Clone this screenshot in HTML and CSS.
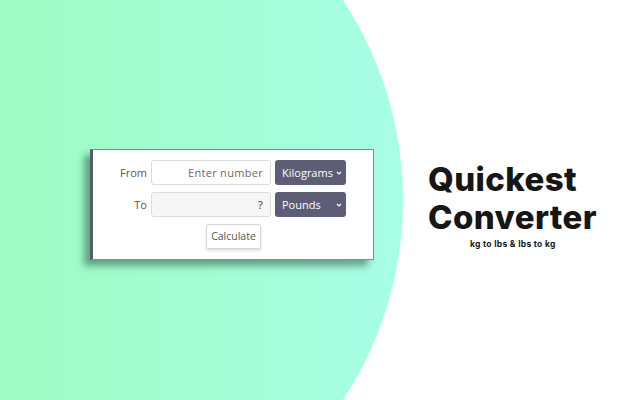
FILE: index.html
```html
<!DOCTYPE html>
<html>
<head>
<meta charset="utf-8">
<link rel="stylesheet" href="styles.css">
</head>
<body>
<div class="page">
  <div class="card">
    <div class="row">
      <span class="label">From</span>
      <div class="field">Enter number</div>
      <div class="select"><span>Kilograms</span><svg class="chev" viewBox="0 0 6 4" width="6" height="4"><path d="M1 1 L3 3 L5 1" fill="none" stroke="#fff" stroke-width="1.2"/></svg></div>
    </div>
    <div class="row">
      <span class="label">To</span>
      <div class="field out">?</div>
      <div class="select"><span>Pounds</span><svg class="chev" viewBox="0 0 6 4" width="6" height="4"><path d="M1 1 L3 3 L5 1" fill="none" stroke="#fff" stroke-width="1.2"/></svg></div>
    </div>
    <div class="actions">
      <div class="btn">Calculate</div>
    </div>
  </div>
  <div class="brand">
    <div class="title">Quickest<br>Converter</div>
    <div class="sub">kg to lbs &amp; lbs to kg</div>
  </div>
</div>
</body>
</html>
```
FILE: styles.css
```css
html, body {
  margin: 0;
  padding: 0;
  width: 640px;
  height: 400px;
  overflow: hidden;
  background: #ffffff;
}
.page {
  position: relative;
  width: 640px;
  height: 400px;
  overflow: hidden;
  display: flex;
  align-items: center;
  padding-left: 90px;
  box-sizing: border-box;
  font-family: "Open Sans", "DejaVu Sans", sans-serif;
}
.page::before {
  content: "";
  position: absolute;
  left: -323px;
  top: -163px;
  width: 726px;
  height: 726px;
  border-radius: 50%;
  background: linear-gradient(90deg, #9ffcc3 323px, #a3fdd3 520px, #a8fde6 726px);
  z-index: 0;
}
.card {
  position: relative;
  z-index: 1;
  width: 284px;
  height: 111px;
  box-sizing: border-box;
  background: #fff;
  border: 1px solid #8c8c8c;
  border-left: 3px solid #5a5a6e;
  box-shadow: -6px 6px 7px rgba(40, 90, 70, 0.55);
  display: flex;
  flex-direction: column;
  gap: 7px;
  padding-top: 10px;
  margin-top: 9px;
}
.row {
  display: flex;
  align-items: center;
  height: 25px;
}
.label {
  width: 54px;
  text-align: right;
  font-size: 11px;
  color: #555;
  padding-right: 4px;
}
.field {
  width: 120px;
  height: 25px;
  box-sizing: border-box;
  border: 1px solid #dcdcdc;
  border-radius: 3px;
  background: #fff;
  font-size: 11px;
  color: #6a6a6a;
  text-align: right;
  line-height: 23px;
  padding-right: 7px;
  letter-spacing: 0.3px;
}
.field.out {
  background: #f6f6f6;
  color: #333;
}
.select {
  margin-left: 4px;
  width: 71px;
  height: 25px;
  box-sizing: border-box;
  background: #5d5d75;
  border-radius: 3px;
  color: #fff;
  font-size: 11px;
  display: flex;
  align-items: center;
  justify-content: space-between;
  padding: 0 4px 0 7px;
}
.chev {
  flex: none;
}
.actions {
  display: flex;
  justify-content: flex-start;
  padding-left: 113px;
}
.btn {
  width: 55px;
  height: 25px;
  box-sizing: border-box;
  border: 1px solid #d6d6d6;
  border-radius: 2px;
  background: #fff;
  box-shadow: 0 2px 3px rgba(0, 0, 0, 0.12);
  font-size: 10.5px;
  color: #555;
  text-align: center;
  line-height: 23px;
}
.brand {
  position: relative;
  z-index: 1;
  margin-left: 54px;
  display: flex;
  flex-direction: column;
  align-items: flex-start;
  margin-top: 8px;
}
.title {
  font-family: "Inter", "DejaVu Sans", sans-serif;
  font-weight: 800;
  font-size: 33px;
  line-height: 38px;
  color: #161616;
  letter-spacing: 0.4px;
}
.sub {
  font-family: "Inter", "DejaVu Sans", sans-serif;
  font-weight: 700;
  font-size: 8.5px;
  letter-spacing: 0.3px;
  color: #161616;
  margin-left: 42px;
  margin-top: 3px;
}
```
